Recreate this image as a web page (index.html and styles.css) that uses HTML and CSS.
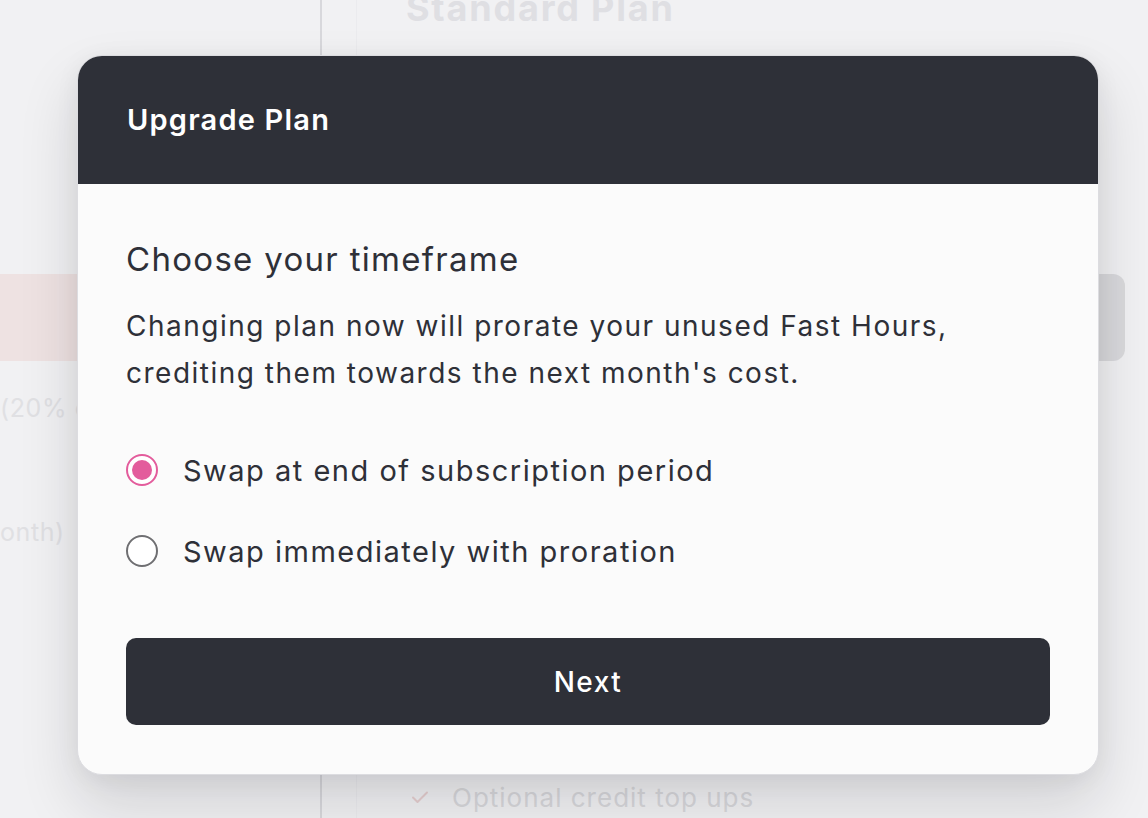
FILE: index.html
```html
<!DOCTYPE html>
<html lang="en">
<head>
<meta charset="utf-8">
<title>Upgrade Plan</title>
<link rel="stylesheet" href="styles.css">
</head>
<body>
<div class="page">
  <div class="col-left">
    <div class="seg-pink"></div>
    <p class="faint-text discount">(20% off)</p>
    <p class="faint-text per">onth)</p>
  </div>
  <div class="col-mid"></div>
  <div class="col-main">
    <h2 class="plan-name">Standard Plan</h2>
    <div class="seg-gray"></div>
    <ul class="features">
      <li class="feature">
        <svg class="check" viewBox="0 0 20 20" width="20" height="20"><path d="M3 10.5l4.5 4.5L17 5.5" fill="none" stroke="currentColor" stroke-width="2" stroke-linecap="round" stroke-linejoin="round"/></svg>
        <span>Optional credit top ups</span>
      </li>
    </ul>
  </div>
</div>

<div class="modal" role="dialog" aria-labelledby="modal-title">
  <div class="modal-header">
    <h1 id="modal-title" class="modal-title">Upgrade Plan</h1>
  </div>
  <div class="modal-body">
    <h2 class="section-title">Choose your timeframe</h2>
    <p class="description">Changing plan now will prorate your unused Fast Hours,<br>crediting them towards the next month's cost.</p>
    <div class="options">
      <label class="option">
        <span class="radio radio-checked"><span class="radio-dot"></span></span>
        <span class="option-label">Swap at end of subscription period</span>
      </label>
      <label class="option">
        <span class="radio"></span>
        <span class="option-label">Swap immediately with proration</span>
      </label>
    </div>
    <button class="btn-next" type="button">Next</button>
  </div>
</div>
</body>
</html>
```

FILE: styles.css
```css
* { box-sizing: border-box; }

html, body {
  margin: 0;
  padding: 0;
  height: 100%;
}

body {
  background: #f1f1f3;
  font-family: "Inter", "DejaVu Sans", sans-serif;
  color: #2e3038;
  overflow: hidden;
}

.page {
  display: grid;
  grid-template-columns: 322px 35px 1fr;
  height: 818px;
}

.col-left {
  border-right: 2px solid #d8d8dc;
  padding-top: 274px;
}

.seg-pink {
  height: 87px;
  background: #eee2e2;
}

.faint-text {
  margin: 0;
  font-size: 25px;
  letter-spacing: 0.6px;
  color: #e0e0e3;
  line-height: 40px;
  white-space: nowrap;
}

.discount { margin-top: 27px; }
.per { margin-top: 84px; }

.col-mid {
  border-right: 1px solid #ebebee;
}

.col-main {
  padding: 0 23px 0 49px;
  display: flex;
  flex-direction: column;
}

.plan-name {
  margin: -14px 0 0;
  font-size: 36px;
  line-height: 44px;
  font-weight: 700;
  letter-spacing: 1.8px;
  color: #dfdfe3;
}

.seg-gray {
  margin-top: 244px;
  height: 87px;
  background: #d9d9dc;
  border-radius: 0 12px 12px 0;
}

.features {
  list-style: none;
  margin: 0;
  padding: 0;
  margin-top: auto;
}

.feature {
  display: flex;
  align-items: center;
  gap: 22px;
  font-size: 26px;
  letter-spacing: 1px;
  color: #d8d8db;
  height: 40px;
  margin-bottom: 1px;
  padding-left: 4px;
}

.check {
  color: #e6cfcf;
  flex: none;
}

/* Modal */
.modal {
  position: absolute;
  left: 77px;
  top: 55px;
  width: 1022px;
  height: 720px;
  background: #fbfbfb;
  border: 1px solid #dcdce0;
  border-radius: 25px;
  overflow: hidden;
  box-shadow: 0 30px 60px rgba(20, 20, 30, 0.14), 0 4px 24px rgba(20, 20, 30, 0.06);
  display: flex;
  flex-direction: column;
}

.modal-header {
  height: 128px;
  background: #2e3038;
  display: flex;
  align-items: center;
  padding: 0 49px;
  flex: none;
}

.modal-title {
  margin: 0;
  color: #ffffff;
  font-size: 29px;
  font-weight: 600;
  letter-spacing: 1.2px;
  line-height: 1.2;
}

.modal-body {
  padding: 53px 48px 48px 48px;
  display: flex;
  flex-direction: column;
}

.section-title {
  margin: 0;
  font-size: 33px;
  font-weight: 400;
  letter-spacing: 1.3px;
  line-height: 44px;
  color: #2e3038;
}

.description {
  margin: 22px 0 0;
  font-size: 28px;
  letter-spacing: 1.5px;
  line-height: 47px;
  color: #2e3038;
}

.options {
  margin-top: 49px;
  display: flex;
  flex-direction: column;
  gap: 33px;
}

.option {
  display: flex;
  align-items: center;
  gap: 25px;
  height: 48px;
  font-size: 29px;
  letter-spacing: 1.5px;
  color: #2e3038;
}

.radio {
  width: 32px;
  height: 32px;
  border-radius: 50%;
  border: 2px solid #6f6f72;
  background: #ffffff;
  display: flex;
  align-items: center;
  justify-content: center;
  flex: none;
}

.radio-checked {
  border-color: #e35c9c;
}

.radio-dot {
  width: 20px;
  height: 20px;
  border-radius: 50%;
  background: #e35c9c;
}

.btn-next {
  margin-top: 63px;
  height: 87px;
  width: 100%;
  border: none;
  border-radius: 10px;
  background: #2e3038;
  color: #ffffff;
  font-family: inherit;
  font-size: 28px;
  font-weight: 500;
  letter-spacing: 1.5px;
  cursor: pointer;
}
```
